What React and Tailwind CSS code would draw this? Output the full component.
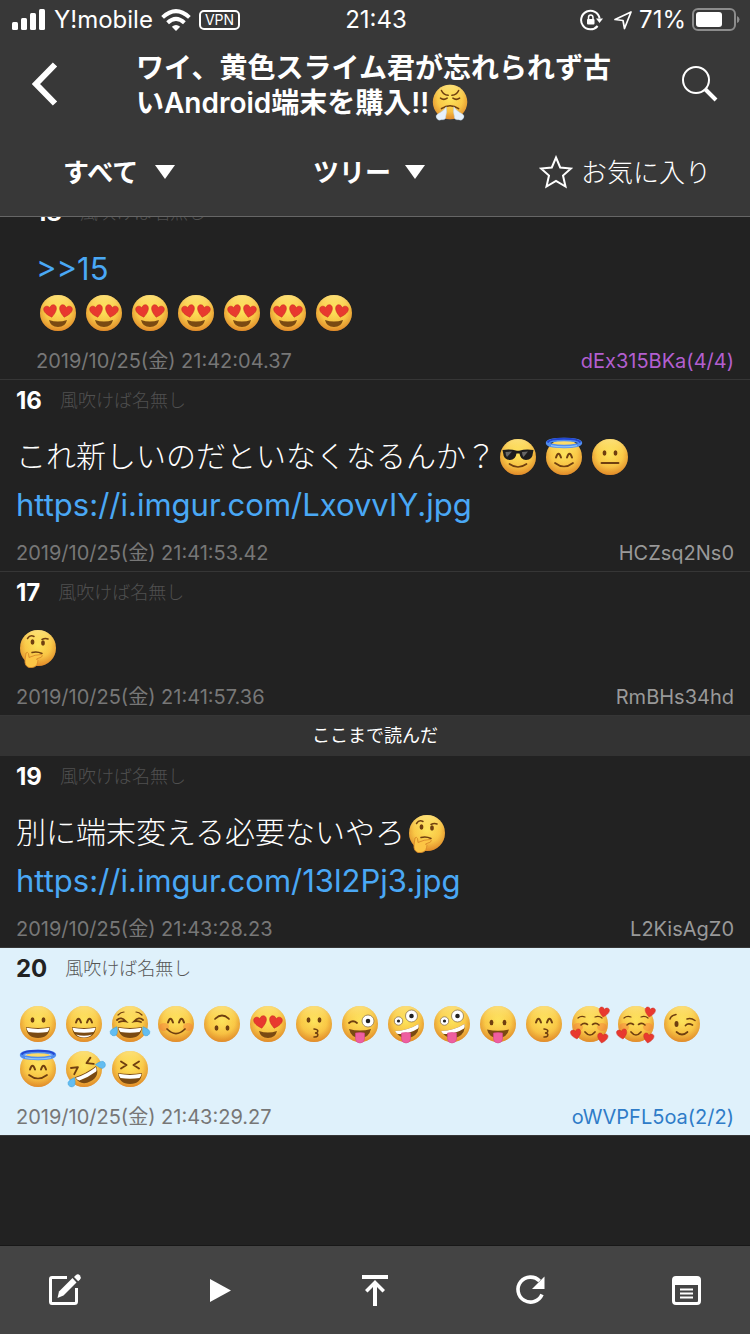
import { useState } from 'react';

const BROWN = '#6f3f10';
const DARK = '#7a4a12';

// Every face is drawn around 0,0 with a radius of 18
const Smile = ({ y = 6, w = 9, d = 6 }) => (
  <path d={`M${-w} ${y}Q0 ${y + d * 2} ${w} ${y}`} fill="none" stroke={BROWN} strokeWidth="1.7" strokeLinecap="round" />
);

const DotEyes = ({ y = -4, x = 5.5 }) => (
  <g fill={BROWN}>
    <ellipse cx={-x} cy={y} rx="1.9" ry="2.7" />
    <ellipse cx={x} cy={y} rx="1.9" ry="2.7" />
  </g>
);

const ArcEyes = ({ y = -3 }) => (
  <g fill="none" stroke={BROWN} strokeWidth="2" strokeLinecap="round">
    <path d={`M-8 ${y + 1.5}Q-5.5 ${y - 6} -3 ${y + 1.5}`} />
    <path d={`M3 ${y + 1.5}Q5.5 ${y - 6} 8 ${y + 1.5}`} />
  </g>
);

const Grin = ({ y = 3 }) => (
  <g transform={`translate(0 ${y})`}>
    <path d="M-12 0Q0 2 12 0Q11 11 0 11Q-11 11 -12 0Z" fill={DARK} />
    <path d="M-11.5 .8Q0 3 11.5 .8Q11 4 9.5 5Q0 6.5 -9.5 5Q-11 4 -11.5 .8Z" fill="#fff" />
  </g>
);

const Heart = ({ x, y, s = 1, r = 0 }) => (
  <path
    transform={`translate(${x} ${y}) rotate(${r}) scale(${s})`}
    d="M0 6C-4 3 -6.5 0 -6 -3C-5.4 -6 -1.3 -6.2 0 -3C1.3 -6.2 5.4 -6 6 -3C6.5 0 4 3 0 6Z"
    fill="#e8392f"
    stroke="#c8281f"
    strokeWidth=".5"
  />
);

const Blush = () => (
  <g fill="#f4743a" opacity=".38">
    <ellipse cx="-12" cy="3" rx="5" ry="4" />
    <ellipse cx="12" cy="3" rx="5" ry="4" />
  </g>
);

const Tongue = () => (
  <path d="M-4.5 9Q0 8 4.5 9V15Q4 19 0 19Q-4 19 -4.5 15Z" fill="#ee5fa0" stroke="#d94488" strokeWidth=".6" />
);

const Kiss = () => (
  <path d="M0 5Q5 5.5 3.5 8Q2.5 9 1 9Q5 9.5 3.5 12Q2.5 13.3 0 13" fill="none" stroke={BROWN} strokeWidth="1.5" strokeLinecap="round" />
);

const Tear = ({ x, y, r }) => (
  <path transform={`translate(${x} ${y}) rotate(${r})`} d="M0 -5Q4 0 3.5 2.5Q2.5 5 0 5Q-2.5 5 -3.5 2.5Q-4 0 0 -5Z" fill="#63bdf0" stroke="#3ea2df" strokeWidth=".5" />
);

const Eyeball = ({ x, y, r }) => (
  <g>
    <circle cx={x} cy={y} r={r} fill="#fff" stroke="#7d6545" strokeWidth=".7" />
    <circle cx={x} cy={y} r={r * 0.38} fill="#222" />
  </g>
);

const FACES = {
  grin: <><DotEyes /><Grin /></>,
  beam: <><ArcEyes /><Grin /><path d="M-8 10.5Q0 13 8 10.5Q5 13.4 0 13.4Q-5 13.4 -8 10.5Z" fill="#fff" /></>,
  joy: (
    <>
      <g fill="none" stroke={BROWN} strokeWidth="1.8" strokeLinecap="round">
        <path d="M-13 -4Q-9 -8 -4 -2.5Q-8 -3.5 -11 -2" />
        <path d="M13 -4Q9 -8 4 -2.5Q8 -3.5 11 -2" />
        <path d="M-12 -9Q-9 -12 -6 -12M12 -9Q9 -12 6 -12" strokeWidth="1.2" />
      </g>
      <Grin />
      <Tear x={-15.5} y={7} r={30} />
      <Tear x={15.5} y={7} r={-30} />
    </>
  ),
  blush: <><Blush /><ArcEyes /><Smile w={9} y={5} d={4.5} /></>,
  upside: <g transform="rotate(180)"><DotEyes /><Smile w={7} y={5} d={3.5} /></g>,
  hearts: (
    <>
      <Heart x={-7.5} y={-2} s={1.05} r={-12} />
      <Heart x={7.5} y={-2} s={1.05} r={12} />
      <path d="M-9 7Q0 10 9 7Q7.5 14 0 14Q-7.5 14 -9 7Z" fill={DARK} />
    </>
  ),
  kiss: <><DotEyes /><Kiss /></>,
  kissSmile: <><ArcEyes /><Kiss /></>,
  winkTongue: (
    <>
      <path d="M-11 -1Q-7 -4.5 -3 -1" fill="none" stroke={BROWN} strokeWidth="1.8" strokeLinecap="round" />
      <Eyeball x={8} y={-3} r={6} />
      <path d="M-11 5Q0 8 11 5Q9 14 0 14Q-9 14 -11 5Z" fill={DARK} />
      <Tongue />
    </>
  ),
  zany: (
    <>
      <Eyeball x={5.5} y={-8} r={6} />
      <Eyeball x={-7.5} y={-3} r={4.2} />
      <path d="M-11 7Q2 6.5 12.5 0Q14 9 6 13Q-5 17 -11 7Z" fill={DARK} />
      <path d="M-11 7Q2 6.5 12.5 0Q13 3 12 4.5Q2 11 -9 9.8Z" fill="#fff" />
      <Tongue />
    </>
  ),
  tongue: (
    <>
      <DotEyes x={6.5} y={-1.5} />
      <path d="M-11 5.5Q0 8 11 5.5Q9 14 0 14Q-9 14 -11 5.5Z" fill={DARK} />
      <Tongue />
    </>
  ),
  loving: (
    <>
      <Blush />
      <g fill="none" stroke={BROWN} strokeWidth="1.6" strokeLinecap="round">
        <path d="M-12 -6Q-9 -8.5 -5 -7M12 -6Q9 -8.5 5 -7" strokeWidth="1.2" />
        <path d="M-9 1Q-6 -2 -2.5 .5M9 1Q6 -2 2.5 .5" />
      </g>
      <Smile w={5} y={8} d={3} />
      <Heart x={14} y={-12} s={0.85} r={10} />
      <Heart x={-14} y={10} s={0.85} r={-12} />
      <Heart x={12.5} y={14} s={0.85} r={10} />
    </>
  ),
  wink: (
    <>
      <g fill="none" stroke={BROWN} strokeWidth="1.7" strokeLinecap="round">
        <path d="M-12 -5Q-11 -8.5 -6 -9.5M5 -5Q9 -6.5 13 -3.5" strokeWidth="1.5" />
        <path d="M3.5 1.5Q6 -1.5 10.5 1" />
      </g>
      <ellipse cx="-5.5" cy="0" rx="2" ry="3" fill={BROWN} />
      <Smile w={5.5} y={8} d={2.5} />
    </>
  ),
  halo: (
    <>
      <ArcEyes y={-1} />
      <Smile w={9} y={6} d={3.5} />
      <ellipse cx="0" cy="-14" rx="16.5" ry="3.5" fill="none" stroke="#4f8df0" strokeWidth="3.4" />
      <path d="M-16.5 -14.5C-14 -19.5 14 -19.5 16.5 -14.5" fill="none" stroke="#2447d0" strokeWidth="2" />
      <path d="M-13 -11.3Q0 -8.8 13 -11.3" fill="none" stroke="#8cc4fb" strokeWidth="1.2" />
    </>
  ),
  rofl: (
    <g transform="rotate(-28)">
      <g fill="none" stroke={BROWN} strokeWidth="1.9" strokeLinecap="round" strokeLinejoin="round">
        <path d="M-11 -7L-4.5 -4.5L-11 0M11 -7L5 -4L11 0" />
      </g>
      <Grin y={3} />
      <Tear x={-16.5} y={6} r={55} />
      <Tear x={16.5} y={4} r={-60} />
    </g>
  ),
  squint: (
    <>
      <path d="M-9 -7.5L-3.5 -4L-9 -.5M9 -7.5L3.5 -4L9 -.5" fill="none" stroke={BROWN} strokeWidth="1.9" strokeLinecap="round" strokeLinejoin="round" />
      <Grin y={4} />
    </>
  ),
  cool: (
    <>
      <path d="M-15.5 -7Q-8 -8.5 -1 -6.2H1Q8 -8.5 15.5 -7L15 -4.5Q14.5 3 8 3Q2.5 3 1.5 -3.5H-1.5Q-2.5 3 -8 3Q-14.5 3 -15 -4.5Z" fill="#1d1d1d" />
      <path d="M-12.5 -5L-6 -5.5L-11 0Q-12.5 -2 -12.5 -5ZM4 -5L10 -5.5L5.5 0Q4 -2 4 -5Z" fill="#666" />
      <Smile w={8.5} y={7} d={3} />
    </>
  ),
  neutral: <><DotEyes /><path d="M-8.5 6H8.5" stroke={BROWN} strokeWidth="1.9" strokeLinecap="round" /></>,
  thinking: (
    <>
      <g fill="none" stroke={BROWN} strokeWidth="1.5" strokeLinecap="round">
        <path d="M-10.5 -9.5Q-8 -13.5 -4 -11.5M4 -8.5Q7 -10 10 -9" />
        <path d="M-6 4.5Q-1 3 4 5.5" />
      </g>
      <ellipse cx="-5.5" cy="-6" rx="1.9" ry="2.7" fill={BROWN} />
      <ellipse cx="5" cy="-5" rx="1.9" ry="2.7" fill={BROWN} />
      <path d="M-12 5Q-10.5 3.5 -9.5 5.5L-9 9.5Q-3 6.5 3.5 6.5Q5 7.5 3.5 9L-1.5 11Q1 12.5 -.5 14.5Q-1 19 -6 19.5H-9Q-13.5 18 -13 12Z" fill="#fcc545" stroke="#d8892a" strokeWidth=".9" />
    </>
  ),
  huff: (
    <>
      <g fill="none" stroke={BROWN} strokeWidth="1.6" strokeLinecap="round">
        <path d="M-9 -12Q-7 -7.5 -2 -7M9 -12Q7 -7.5 2 -7" />
        <path d="M-10 -4Q-6.5 -1.5 -3 -4M10 -4Q6.5 -1.5 3 -4" />
        <path d="M-9 7Q0 1 9 7" />
      </g>
      <g fill="#e6f1fb" stroke="#b9d3ea" strokeWidth=".5">
        <path d="M-4 5Q-6 9 -12 12Q-16 14 -14 17Q-12 20 -9 18.5Q-4 19 -4.5 15Q-3 10 -4 5Z" />
        <path d="M4 5Q6 9 12 12Q16 14 14 17Q12 20 9 18.5Q4 19 4.5 15Q3 10 4 5Z" />
      </g>
    </>
  ),
};

function Emoji({ name, className = 'size-[46px]' }) {
  return (
    <svg viewBox="-22 -23 46 46" role="img" aria-label={name} className={`shrink-0 ${className}`}>
      <circle r="18" fill="url(#face)" />
      <circle r="18" fill="url(#shine)" />
      {FACES[name]}
    </svg>
  );
}

const POSTS = [
  {
    no: 18,
    indent: true,
    tight: true,
    lines: [{ link: '>>15' }, { emoji: Array(7).fill('hearts') }],
    date: '2019/10/25(金) 21:42:04.37',
    id: 'dEx315BKa(4/4)',
    idColor: 'text-[#b35fd0]',
  },
  {
    no: 16,
    lines: [
      { text: 'これ新しいのだといなくなるんか？', emoji: ['cool', 'halo', 'neutral'] },
      { link: 'https://i.imgur.com/LxovvIY.jpg' },
    ],
    date: '2019/10/25(金) 21:41:53.42',
    id: 'HCZsq2Ns0',
  },
  { no: 17, tight: true, lines: [{ emoji: ['thinking'] }], date: '2019/10/25(金) 21:41:57.36', id: 'RmBHs34hd', last: true },
  {
    no: 19,
    lines: [
      { text: '別に端末変える必要ないやろ', emoji: ['thinking'] },
      { link: 'https://i.imgur.com/13l2Pj3.jpg' },
    ],
    date: '2019/10/25(金) 21:43:28.23',
    id: 'L2KisAgZ0',
  },
  {
    no: 20,
    own: true,
    tight: true,
    lines: [
      {
        emoji: [
          'grin', 'beam', 'joy', 'blush', 'upside', 'hearts', 'kiss', 'winkTongue',
          'zany', 'zany', 'tongue', 'kissSmile', 'loving', 'loving', 'wink',
        ],
      },
      { emoji: ['halo', 'rofl', 'squint'] },
    ],
    date: '2019/10/25(金) 21:43:29.27',
    id: 'oWVPFL5oa(2/2)',
    idColor: 'text-[#2f7cc8]',
  },
];

function Post({ post }) {
  return (
    <article
      className={`border-b border-[#363636] pt-[7px] pr-4 pb-1 ${post.indent ? 'pl-9' : 'pl-4'} ${
        post.own ? 'bg-[#dff1fb] text-[#222]' : 'bg-[#222] text-white'
      }`}
    >
      <header className="flex h-7 items-center gap-[18px]">
        <b className="text-2xl">{post.no}</b>
        <span className={`text-lg font-light ${post.own ? 'text-[#555]' : 'text-[#505050]'}`}>風吹けば名無し</span>
      </header>
      <div className="mt-[18px] min-h-[46px]">
        {post.lines.map((line, i) => (
          <div key={i} className={`flex items-center ${post.tight ? 'h-[45px]' : 'h-[47px]'}`}>
            {line.text && <span className="text-[30px] font-light">{line.text}</span>}
            {line.link && <a href="#" className="pt-1 text-[31px] text-[#4aa8f5]">{line.link}</a>}
            {line.emoji?.map((name, n) => <Emoji key={n} name={name} />)}
          </div>
        ))}
      </div>
      <footer className="mt-3 flex h-7 items-center justify-between text-xl">
        <time className="text-[#777]">{post.date}</time>
        <a href="#" className={post.idColor ?? 'text-[#999]'}>{post.id}</a>
      </footer>
    </article>
  );
}

function StatusBar() {
  return (
    <div className="grid h-10 grid-cols-[1fr_auto_1fr] items-center pr-2.5 pl-3 text-2xl">
      <div className="flex items-center gap-2">
        <svg viewBox="0 0 34 22" className="w-[34px]" fill="#fff">
          <rect y="13" width="6" height="8" rx="1.5" />
          <rect x="9" y="9" width="6" height="12" rx="1.5" />
          <rect x="18" y="4" width="6" height="17" rx="1.5" />
          <rect x="27" width="6" height="21" rx="1.5" />
        </svg>
        <span>Y!mobile</span>
        <svg viewBox="0 0 30 22" className="w-[30px]">
          <path d="M15 22L10.8 17.8Q15 14.2 19.2 17.8Z" fill="#fff" />
          <g fill="none" stroke="#fff" strokeWidth="4">
            <path d="M1.6 8.4Q15 -4 28.4 8.4" />
            <path d="M6.6 13.8Q15 6 23.4 13.8" />
          </g>
        </svg>
        <span className="flex h-5 items-center rounded-[5px] border-2 border-white px-1 text-sm">VPN</span>
      </div>
      <span>21:43</span>
      <div className="flex items-center justify-end gap-1.5">
        <svg viewBox="0 0 23 22" className="mr-1 w-[23px]" fill="none" stroke="#fff" strokeWidth="2">
          <path d="M17.6 17A9.3 9.3 0 1 1 19.6 9.5" />
          <path d="M16 9.5H23L19.5 14Z" fill="#fff" stroke="none" />
          <rect x="7" y="10" width="7.5" height="5.5" rx="1" fill="#fff" stroke="none" />
          <path d="M8.5 11V8.5Q8.5 6 10.7 6T13 8.5V11" strokeWidth="1.5" />
        </svg>
        <svg viewBox="0 0 20 20" className="w-5" fill="none" stroke="#fff" strokeWidth="1.7" strokeLinejoin="round">
          <path d="M18 2L11.5 18.5L10 10.5L2 9.5Z" />
        </svg>
        <span>71%</span>
        <svg viewBox="0 0 48 24" className="w-12">
          <rect x="1" y="1" width="42" height="21" rx="5" fill="none" stroke="#8c8c8c" strokeWidth="2" />
          <rect x="4" y="4" width="26" height="15" rx="3" fill="#fff" />
          <path d="M45 8Q47.5 9 47.5 11.5T45 15Z" fill="#8c8c8c" />
        </svg>
      </div>
    </div>
  );
}

function FilterSelect({ label, options }) {
  const [value, setValue] = useState(options[0]);

  return (
    <label className="flex items-center justify-center pr-3">
      <select
        aria-label={label}
        value={value}
        onChange={(e) => setValue(e.target.value)}
        className="w-[92px] appearance-none bg-transparent text-[26px] font-bold"
      >
        {options.map((o) => <option key={o}>{o}</option>)}
      </select>
      <svg viewBox="0 0 20 14" className="w-5" fill="#fff"><path d="M0 0H20L10 14Z" /></svg>
    </label>
  );
}

const TOOLS = [
  {
    label: '書き込む',
    icon: (
      <>
        <path d="M20 4.5H5Q3.5 4.5 3.5 6V28.5Q3.5 30.5 5 30.5H27.5Q29.5 30.5 29.5 28.5V15" fill="none" stroke="#fff" strokeWidth="3" />
        <path d="M10.5 25L12 18.5L25.5 5L29.5 9.5L16.5 22.5Z" />
        <path d="M27 4L29 2Q31 .5 33 2.5Q34.5 4.5 33 6.5L31.2 8.3Z" />
      </>
    ),
  },
  { label: '再生', icon: <path d="M7 6L28 17.5L7 29Z" /> },
  {
    label: '先頭へ',
    icon: <path d="M4 2H30V6H4ZM15 33V14L9.5 19.5L7 17L17 7L27 17L24.5 19.5L19 14V33Z" />,
  },
  {
    label: '更新',
    icon: (
      <>
        <path d="M25.6 8A12.5 12.5 0 1 0 28 21.5" fill="none" stroke="#fff" strokeWidth="3.6" />
        <path d="M30.5 3.5V16H18Z" />
      </>
    ),
  },
  {
    label: 'メニュー',
    icon: (
      <>
        <rect x="4.5" y="4.5" width="26" height="26" rx="2.5" fill="none" stroke="#fff" strokeWidth="3" />
        <path d="M4 5H31V12H4ZM11 15.5H24V17.5H11ZM11 19.5H24V21.5H11ZM11 23.5H24V25.5H11Z" />
      </>
    ),
  },
];

export default function App() {
  return (
    <div className="flex h-screen flex-col bg-[#222] font-['Inter','Noto_Sans_CJK_JP',sans-serif] text-white">
      <svg className="absolute size-0" aria-hidden="true">
        <defs>
          <radialGradient id="face" cx=".5" cy=".42" r=".6">
            <stop offset="0" stopColor="#fde25a" />
            <stop offset=".6" stopColor="#f9c443" />
            <stop offset="1" stopColor="#d98025" />
          </radialGradient>
          <linearGradient id="shine" x1="0" y1="0" x2="0" y2="1">
            <stop offset="0" stopColor="#fff7a0" stopOpacity=".6" />
            <stop offset=".45" stopColor="#ffe860" stopOpacity=".1" />
            <stop offset="1" stopColor="#e8912a" stopOpacity=".45" />
          </linearGradient>
        </defs>
      </svg>

      <div className="shrink-0 border-b border-[#666] bg-[#383838]">
        <StatusBar />
        <div className="flex h-[88px] items-center">
          <button type="button" aria-label="戻る" className="w-34 pl-8">
            <svg viewBox="0 0 28 44" className="w-7" fill="none" stroke="#fff" strokeWidth="6">
              <path d="M23 2.5L4 22L23 41.5" />
            </svg>
          </button>
          <h1 className="flex-1 pt-1 text-[28px] leading-[35px] font-semibold">
            ワイ、黄色スライム君が忘れられず古いAndroid端末を購入!!
            <Emoji name="huff" className="-my-1.5 inline-block size-11 align-top" />
          </h1>
          <button type="button" aria-label="検索" className="flex w-34 justify-end pr-8">
            <svg viewBox="0 0 36 36" className="w-9" fill="none" stroke="#fff">
              <circle cx="14" cy="14" r="13" strokeWidth="2" />
              <path d="M23.5 23.5L34 34" strokeWidth="4" />
            </svg>
          </button>
        </div>
        <div className="grid h-[88px] grid-cols-3">
          <FilterSelect label="表示" options={['すべて', '画像', 'リンク']} />
          <FilterSelect label="並び順" options={['ツリー', '番号順']} />
          <button type="button" className="flex items-center justify-center gap-2 text-[26px] font-light">
            <svg viewBox="0 0 34 34" className="w-[34px]" fill="none" stroke="#fff" strokeWidth="2">
              <path d="M17 2.5L21.2 12.5L32 13.5L24 20.5L26.5 31.5L17 26L7.5 31.5L10 20.5L2 13.5L12.8 12.5Z" />
            </svg>
            お気に入り
          </button>
        </div>
      </div>

      <main className="min-h-0 flex-1 overflow-hidden">
        <div className="-mt-[25px]">
          {POSTS.map((post) => (
            <div key={post.no}>
              <Post post={post} />
              {post.last && (
                <p className="flex h-10 items-center justify-center bg-[#333] text-lg">ここまで読んだ</p>
              )}
            </div>
          ))}
        </div>
      </main>

      <nav className="flex h-[89px] shrink-0 items-center justify-between border-t border-[#181818] bg-[#444] px-[47px]">
        {TOOLS.map(({ label, icon }) => (
          <button key={label} type="button" aria-label={label}>
            <svg viewBox="0 0 34 34" className="w-[34px] overflow-visible" fill="#fff">{icon}</svg>
          </button>
        ))}
      </nav>
    </div>
  );
}
